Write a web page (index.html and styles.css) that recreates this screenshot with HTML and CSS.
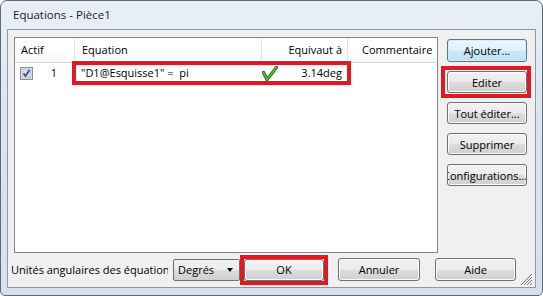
FILE: index.html
```html
<!DOCTYPE html>
<html lang="fr">
<head>
  <meta charset="UTF-8">
  <title>Equations - Pièce1</title>
  <link rel="stylesheet" href="styles.css">
</head>
<body>
<div class="window">
  <div class="titlebar">Equations - Pièce1</div>
  <div class="client">
    <div class="main">
      <div class="list">
        <div class="list-head">
          <div class="col c-actif">Actif</div>
          <div class="col c-eq">Equation</div>
          <div class="col c-val">Equivaut à</div>
          <div class="col c-com">Commentaire</div>
        </div>
        <div class="list-row">
          <div class="col c-actif">
            <svg class="check" width="13" height="13" viewBox="0 0 13 13">
              <rect x="0.5" y="0.5" width="12" height="12" fill="#f4f4f4" stroke="#8f8f8f"/>
              <rect x="2" y="2" width="9" height="9" fill="#d7dde6" stroke="#b3bccb" stroke-width="1"/>
              <path d="M3.5 6.5 L5.5 9 L9.5 3" fill="none" stroke="#3a4f8e" stroke-width="1.8"/>
            </svg>
            <span class="num">1</span>
          </div>
          <div class="mark">
            <div class="col c-eq">"D1@Esquisse1" =&nbsp; pi</div>
            <div class="col c-val">
              <svg class="ok" width="16" height="15" viewBox="0 0 16 15">
                <path d="M1.5 6.5 L5 13.5 L14.5 1.5" fill="none" stroke="#2c6a1c" stroke-width="3.4" stroke-linejoin="round" stroke-linecap="round"/>
                <path d="M1.5 6.5 L5 13.5 L14.5 1.5" fill="none" stroke="#52c23c" stroke-width="1.6" stroke-linejoin="round" stroke-linecap="round"/>
              </svg>
              <span>3.14deg</span>
            </div>
          </div>
          <div class="col c-com"></div>
        </div>
      </div>
      <div class="side">
        <button class="btn default">Ajouter...</button>
        <div class="hl hl-edit"><button class="btn">Editer</button></div>
        <button class="btn">Tout éditer...</button>
        <button class="btn">Supprimer</button>
        <button class="btn clip">Configurations...</button>
      </div>
    </div>
    <div class="bottom">
      <div class="label">Unités angulaires des équations</div>
      <div class="combo">Degrés<span class="arrow"></span></div>
      <div class="hl hl-ok"><button class="btn b-ok">OK</button></div>
      <button class="btn b-cancel">Annuler</button>
      <button class="btn b-help">Aide</button>
    </div>
    <svg class="grip" width="13" height="13" viewBox="0 0 13 13">
      <path d="M12 1 L1 12 M12 4 L4 12 M12 7 L7 12 M12 10 L10 12" stroke="#7a7a7a" stroke-width="1"/>
    </svg>
  </div>
</div>
</body>
</html>
```

FILE: styles.css
```css
body {
  margin: 0;
  font-family: 'Open Sans', 'Noto Sans', sans-serif;
  font-size: 11px;
  color: #000;
}
.window {
  width: 543px;
  height: 296px;
  box-sizing: border-box;
  border: 1px solid #5f6b78;
  border-radius: 7px 7px 5px 5px;
  background: linear-gradient(#e9eff6, #dbe5ef 40%, #d6e1ec);
  padding: 0 6px 7px 6px;
  display: flex;
  flex-direction: column;
}
.titlebar {
  height: 28px;
  line-height: 28px;
  padding-left: 6px;
  font-size: 11.5px;
  color: #1e1e1e;
}
.client {
  position: relative;
  flex: 1;
  border: 1px solid #8c99a8;
  background: #f0f0f0;
  padding: 7px 8px 0 3px;
  display: flex;
  flex-direction: column;
}
.main {
  display: flex;
}
.list {
  margin-left: 3px;
  width: 424px;
  height: 216px;
  box-sizing: border-box;
  border: 1px solid #828790;
  background: #fff;
}
.list-head {
  display: flex;
  height: 24px;
  border-bottom: 1px solid #d8d8d8;
  background: linear-gradient(#fff, #fff 50%, #f7f8fa);
}
.list-head .col {
  line-height: 24px;
  border-right: 1px solid #e3e4e6;
  box-sizing: border-box;
}
.col {
  white-space: nowrap;
  overflow: hidden;
}
.c-actif { width: 60px; padding-left: 6px; box-sizing: border-box; }
.c-eq { width: 187px; padding-left: 7px; box-sizing: border-box; }
.c-val { width: 86px; padding-right: 5px; box-sizing: border-box; text-align: right; }
.c-com { width: 89px; padding-left: 14px; box-sizing: border-box; }
.list-head .c-com { border-right: none; }
.list-row {
  display: flex;
  height: 18px;
  line-height: 18px;
  margin-top: 1px;
}
.list-row .c-actif {
  display: flex;
  align-items: center;
  padding-left: 5px;
}
.num {
  margin-left: auto;
  padding-right: 18px;
}
.mark {
  display: flex;
  outline: 4px solid #e01a22;
  outline-offset: -1px;
}
.list-row .c-eq { padding-left: 6px; }
.list-row .c-val {
  display: flex;
  align-items: center;
  justify-content: space-between;
  padding-right: 6px;
}
.ok { display: block; }
.side {
  margin-left: 9px;
  margin-top: 2px;
  display: flex;
  flex-direction: column;
  gap: 9px;
}
.btn {
  width: 80px;
  height: 22px;
  padding: 0;
  font-family: inherit;
  font-size: 11px;
  color: #000;
  border: 1px solid #707070;
  border-radius: 3px;
  background: linear-gradient(#f2f2f2, #ebebeb 50%, #dddddd 51%, #cfcfcf);
  box-shadow: inset 0 0 0 1px #fbfbfb;
  white-space: nowrap;
  overflow: hidden;
}
.btn.default {
  border-color: #3c7fb1;
  background: linear-gradient(#eef7fd, #e0f1fb 50%, #cde9f9 51%, #bcdff3);
  box-shadow: inset 0 0 0 1px #d4ecf9;
  height: 23px;
}
.hl {
  display: flex;
  border: 4px solid #e01a22;
}
.hl-edit {
  margin: -5px -4px -5px -6px;
  padding: 1px 0 1px 2px;
}
.hl-ok {
  margin: -4px -4px -4px 0;
  padding: 0;
}
.btn.clip {
  text-indent: -5px;
  text-align: left;
}
.bottom {
  display: flex;
  align-items: center;
  margin-top: 5px;
  height: 23px;
}
.label {
  width: 157px;
  white-space: nowrap;
  overflow: hidden;
}
.combo {
  position: relative;
  margin-left: 5px;
  width: 67px;
  height: 22px;
  line-height: 20px;
  box-sizing: border-box;
  padding-left: 4px;
  border: 1px solid #707070;
  border-radius: 2px;
  background: linear-gradient(#f2f2f2, #ebebeb 50%, #dddddd 51%, #cfcfcf);
}
.arrow {
  position: absolute;
  right: 6px;
  top: 8px;
  border-left: 3.5px solid transparent;
  border-right: 3.5px solid transparent;
  border-top: 4px solid #000;
}
.b-ok {
  width: 80px;
  height: 22px;
}
.b-cancel {
  margin-left: 14px;
  width: 82px;
  height: 23px;
}
.b-help {
  margin-left: 15px;
  width: 81px;
  height: 23px;
}
.grip {
  position: absolute;
  right: 2px;
  bottom: 1px;
}
```
